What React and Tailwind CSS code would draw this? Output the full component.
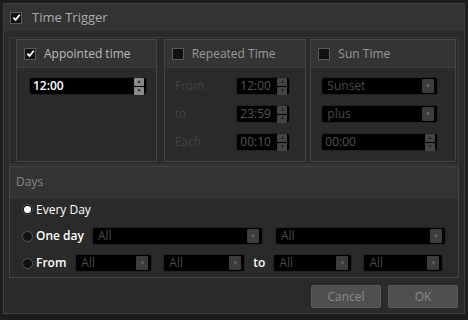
import React from "react";

const Check = ({ checked }) => (
  <span className="w-[12px] h-[12px] bg-[#111] border border-[#5a5a5a] flex items-center justify-center shrink-0">
    {checked && (
      <svg width="9" height="9" viewBox="0 0 10 10">
        <path d="M1.5 5.2 L4 7.6 L8.6 2" stroke="#fff" strokeWidth="2" fill="none" />
      </svg>
    )}
  </span>
);

const Radio = ({ on }) => (
  <span className="w-[11px] h-[11px] rounded-full bg-[#111] border border-[#555] flex items-center justify-center shrink-0">
    {on && <span className="w-[7px] h-[7px] rounded-full bg-white" />}
  </span>
);

const Spin = ({ light }) => (
  <span className="flex flex-col gap-[1px] shrink-0">
    {["▲", "▼"].map((a) => (
      <span
        key={a}
        className={`w-[10px] h-[8px] rounded-[1px] flex items-center justify-center text-[5px] leading-none ${
          light ? "bg-[#8a8a8a] text-[#222]" : "bg-[#444] text-[#222]"
        }`}
      >
        {a}
      </span>
    ))}
  </span>
);

const TimeInput = ({ value, active, className }) => (
  <div
    className={`h-[18px] bg-black rounded-[3px] border border-[#222] flex items-center pl-[3px] pr-[2px] ${className}`}
  >
    <span className={`flex-1 text-[12px] ${active ? "text-white font-semibold" : "text-[#555]"}`}>{value}</span>
    <Spin light={active} />
  </div>
);

const Select = ({ value, className }) => (
  <div className={`h-[18px] bg-black rounded-[3px] border border-[#222] flex items-center pl-[5px] pr-[3px] ${className}`}>
    <span className="flex-1 text-[12px] text-[#4a4a4a]">{value}</span>
    <span className="w-[12px] h-[14px] bg-[#3c3c3c] rounded-[1px] flex items-center justify-center text-[6px] text-[#666]">▼</span>
  </div>
);

const Panel = ({ title, checked, className, children }) => (
  <div className={`border border-[#454545] bg-[#2a2a2a] flex flex-col ${className}`}>
    <div className="h-[28px] bg-[#343434] border-b border-[#3c3c3c] flex items-center gap-[8px] pl-[7px]">
      <Check checked={checked} />
      <span className={`text-[12px] ${checked ? "text-[#bbb]" : "text-[#999]"}`}>{title}</span>
    </div>
    <div className="flex-1 p-[8px] pt-[9px]">{children}</div>
  </div>
);

export default function App() {
  return (
    <div className="w-[468px] h-[320px] bg-[#1d1d1d] p-[3px]" style={{ fontFamily: "'Open Sans', 'Noto Sans', sans-serif" }}>
      <div className="h-[311px] border border-[#3e3e3e] bg-[#2a2a2a] flex flex-col">
        <div className="h-[27px] bg-[#333] flex items-center gap-[10px] pl-[6px] shrink-0">
          <Check checked />
          <span className="text-[13px] text-[#aaa]">Time Trigger</span>
        </div>
        <div className="flex-1 flex flex-col px-[5px] pt-[6px]">
          <div className="flex flex-col border border-[#3a3a3a] pl-[6px] pr-[2px] pt-[1px] pb-[2px]">
            <div className="flex">
              <Panel title="Appointed time" checked className="w-[142px] h-[123px]">
                <TimeInput value="12:00" active className="w-[118px] ml-[4px]" />
              </Panel>
              <Panel title="Repeated Time" className="w-[144px] h-[123px] ml-[7px]">
                <div className="flex flex-col gap-[10px] text-[12px] text-[#444]">
                  {[
                    ["From", "12:00"],
                    ["to", "23:59"],
                    ["Each", "00:10"],
                  ].map(([l, v]) => (
                    <div key={l} className="flex items-center justify-between pl-[2px] pr-[7px]">
                      <span>{l}</span>
                      <TimeInput value={v} className="w-[54px]" />
                    </div>
                  ))}
                </div>
              </Panel>
              <Panel title="Sun Time" className="w-[147px] h-[123px] ml-[4px]">
                <div className="flex flex-col gap-[10px] pl-[2px] pr-[9px]">
                  <Select value="Sunset" />
                  <Select value="plus" />
                  <TimeInput value="00:00" />
                </div>
              </Panel>
            </div>
          </div>
          <div className="mt-[1px] h-[112px] border border-[#454545] bg-[#2a2a2a] flex flex-col">
            <div className="h-[31px] bg-[#333] border-b border-[#3c3c3c] flex items-center pl-[6px] text-[12px] text-[#888] shrink-0">
              Days
            </div>
            <div className="flex flex-col gap-[9px] pl-[12px] pt-[3px] text-[12px] text-white">
              <div className="flex items-center gap-[3px] h-[17px]">
                <Radio on />
                <span>Every Day</span>
              </div>
              <div className="flex items-center gap-[3px] h-[18px]">
                <Radio />
                <span className="font-semibold">One day</span>
                <Select value="All" className="w-[171px] ml-[5px]" />
                <Select value="All" className="w-[171px] ml-[9px]" />
              </div>
              <div className="flex items-center gap-[3px] h-[18px]">
                <Radio />
                <span className="font-semibold">From</span>
                <Select value="All" className="w-[77px] ml-[6px]" />
                <Select value="All" className="w-[82px] ml-[8px]" />
                <span className="font-semibold ml-[5px]">to</span>
                <Select value="All" className="w-[79px] ml-[5px]" />
                <Select value="All" className="w-[80px] ml-[8px]" />
              </div>
            </div>
          </div>
          <div className="flex justify-end gap-[7px] mt-[7px] pr-[1px]">
            <button className="w-[70px] h-[23px] bg-[#4f4f4f] border border-[#5a5a5a] rounded-[2px] text-[12px] text-[#8a8a8a]">
              Cancel
            </button>
            <button className="w-[70px] h-[23px] bg-[#4f4f4f] border border-[#5a5a5a] rounded-[2px] text-[12px] text-[#8a8a8a]">
              OK
            </button>
          </div>
        </div>
      </div>
    </div>
  );
}
